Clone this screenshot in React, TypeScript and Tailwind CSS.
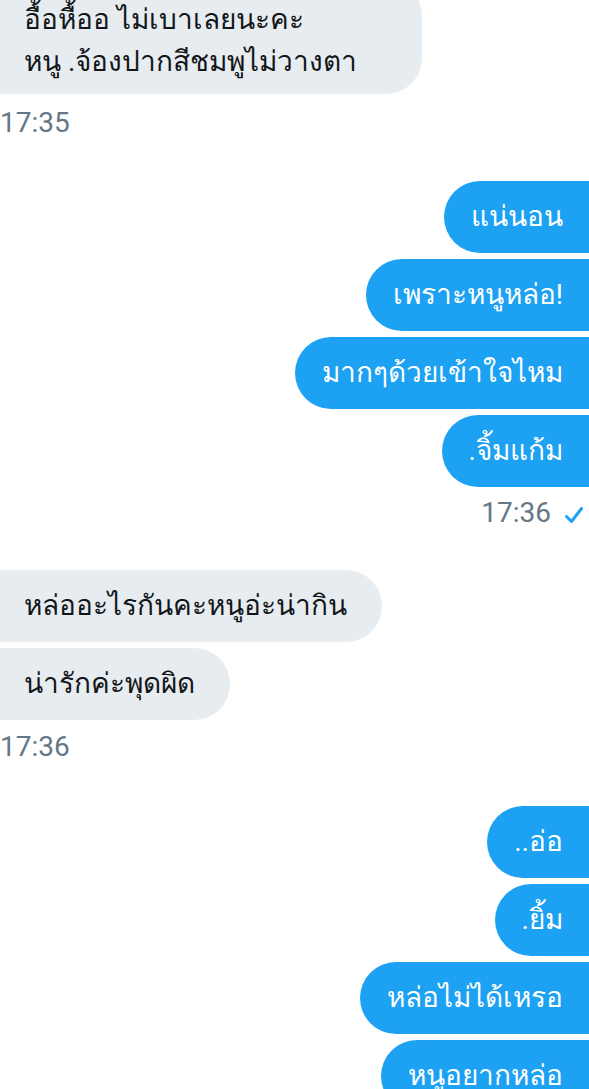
import React from 'react'

const In: React.FC<{ children: React.ReactNode; className?: string }> = ({ children, className = '' }) => (
  <div className={`self-start bg-[#e6ecf0] text-[#14171a] rounded-r-[36px] pl-6 pr-[35px] text-[28px] ${className}`}>
    {children}
  </div>
)

const Out: React.FC<{ children: React.ReactNode; className?: string }> = ({ children, className = '' }) => (
  <div className={`self-end bg-[#1da1f2] text-white rounded-l-[36px] pl-[27px] pr-[26px] py-[18px] text-[28px] leading-[36px] ${className}`}>
    {children}
  </div>
)

const Check = () => (
  <svg width="18" height="18" viewBox="0 0 18 18" fill="none" className="ml-[14px] mt-[4px]">
    <path d="M1.5 10.5 L6.5 15.5 L16.5 2.5" stroke="#1da1f2" strokeWidth="3" strokeLinecap="round" strokeLinejoin="round" />
  </svg>
)

const App: React.FC = () => {
  return (
    <div className="w-[589px] h-[1089px] overflow-hidden bg-white font-['Roboto','Noto_Sans',sans-serif] flex flex-col">
      <In className="w-[422px] -mt-[20px] pt-[19px] pb-[11px] leading-[42px]">
        <div>อื้อหื้ออ ไม่เบาเลยนะคะ</div>
        <div>หนู .จ้องปากสีชมพูไม่วางตา</div>
      </In>
      <div className="mt-[11px] text-[28px] leading-[36px] text-[#657786]">17:35</div>

      <div className="mt-[40px] flex flex-col gap-[6px]">
        <Out>แน่นอน</Out>
        <Out>เพราะหนูหล่อ!</Out>
        <Out>มากๆด้วยเข้าใจไหม</Out>
        <Out>.จิ้มแก้ม</Out>
      </div>
      <div className="mt-[8px] self-end flex items-center pr-[6px] text-[28px] leading-[36px] text-[#657786]">
        17:36
        <Check />
      </div>

      <div className="mt-[39px] flex flex-col gap-[6px]">
        <In className="py-[18px] leading-[36px]">หล่ออะไรกันคะหนูอ่ะน่ากิน</In>
        <In className="py-[18px] leading-[36px]">น่ารักค่ะพุดผิด</In>
      </div>
      <div className="mt-[9px] text-[28px] leading-[36px] text-[#657786]">17:36</div>

      <div className="mt-[41px] flex flex-col gap-[6px]">
        <Out>..อ่อ</Out>
        <Out>.ยิ้ม</Out>
        <Out>หล่อไม่ได้เหรอ</Out>
        <Out>หนูอยากหล่อ</Out>
      </div>
    </div>
  )
}

export default App
